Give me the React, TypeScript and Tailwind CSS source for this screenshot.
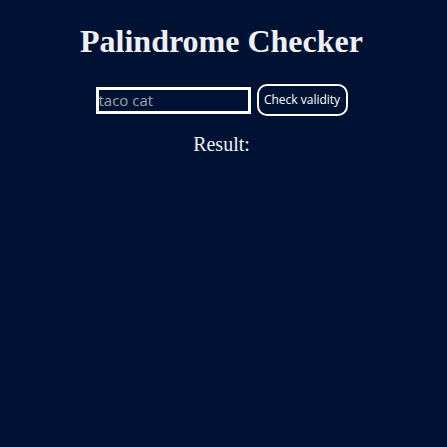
export default function App() {
  return (
    <div className="min-h-[447px] w-full bg-[#001233] flex flex-col items-center pt-[23px] pr-[4px] text-white">
      <h1 className="font-['Liberation_Serif',serif] text-[32px] font-bold leading-[37px] text-[#eef0f4]">
        Palindrome Checker
      </h1>
      <div className="mt-[24px] flex items-center gap-[6px]">
        <input
          type="text"
          placeholder="taco cat"
          className="w-[155px] h-[27px] border-[3px] border-white bg-transparent px-0 text-[15px] font-['Open_Sans',sans-serif] text-white placeholder:text-[#9ea3ad] outline-none"
        />
        <button className="w-[91px] h-[32px] rounded-[10px] border-2 border-white text-center text-[12px] font-['Open_Sans',sans-serif] text-white">
          Check validity
        </button>
      </div>
      <p className="mt-[13px] font-['Liberation_Serif',serif] text-[20px] text-[#eef0f4]">Result:</p>
    </div>
  );
}
